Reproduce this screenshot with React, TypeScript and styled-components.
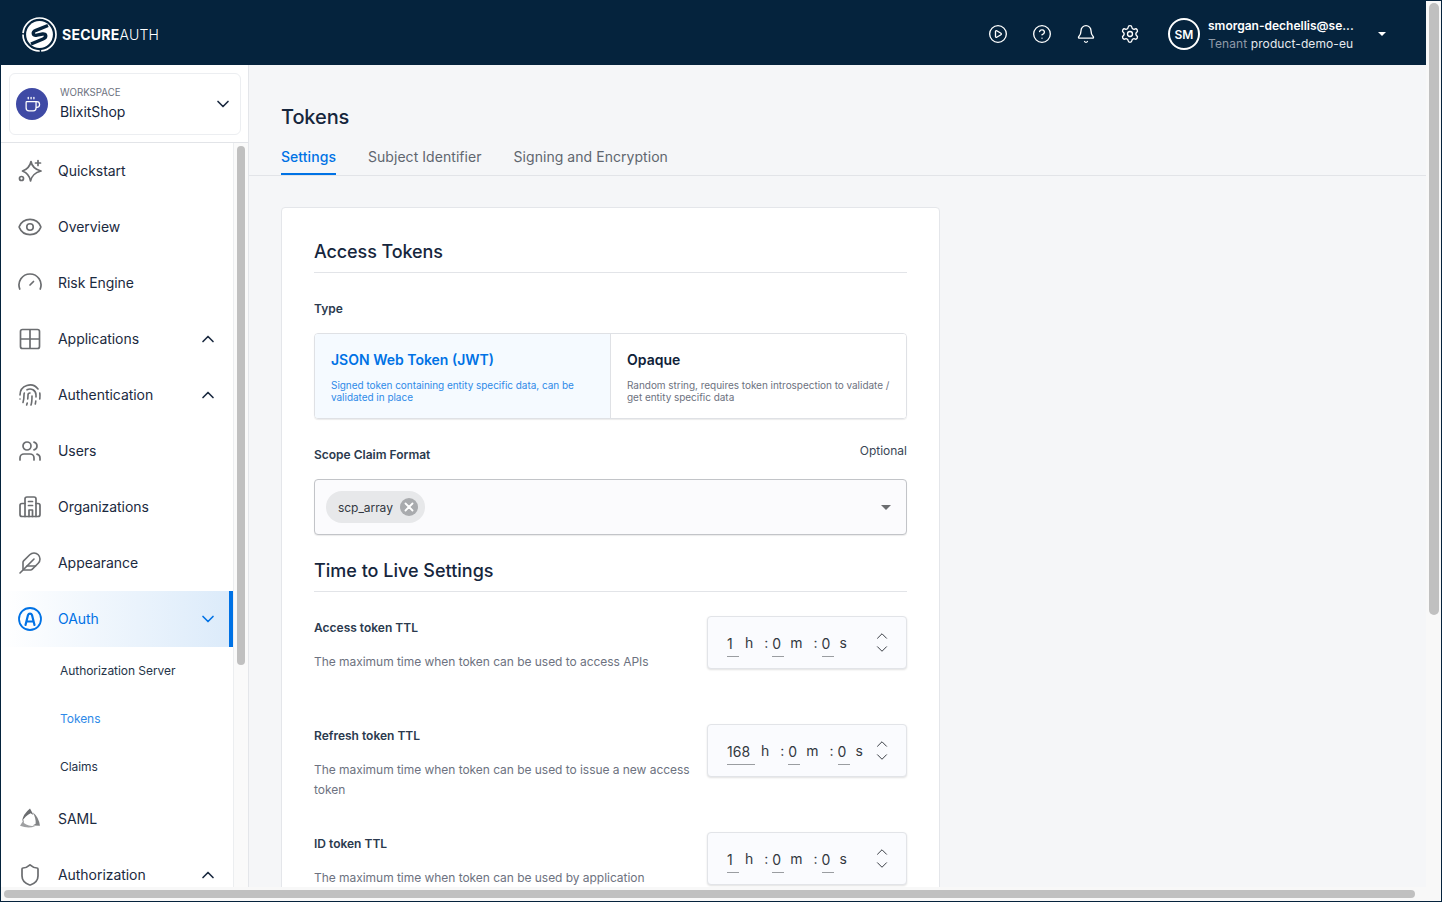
import React from "react";
import styled, { createGlobalStyle } from "styled-components";
import {
  Bell,
  ChevronDown,
  ChevronUp,
  CircleHelp,
  CirclePlay,
  Coffee,
  Eye,
  Feather,
  Fingerprint,
  Settings,
  Shield,
  Users,
} from "lucide-react";

const GlobalStyle = createGlobalStyle`
  html, body {
    margin: 0;
    padding: 0;
    overflow: hidden;
    background: #05233d;
    font-family: Inter, "Liberation Sans", sans-serif;
  }
  * { box-sizing: border-box; }
`;

const Frame = styled.div`
  width: 1442px;
  height: 902px;
  border: 1px solid #05233d;
  display: grid;
  grid-template-columns: 1425px 15px;
  grid-template-rows: 886px 14px;
  overflow: hidden;
  background: #f8f8f8;
`;

const Shell = styled.div`
  display: flex;
  flex-direction: column;
  overflow: hidden;
`;

const VTrack = styled.div`
  background: #f8f8f8;
  padding: 2px 2px 0 3px;
  grid-row: 1 / span 2;
  grid-column: 2;
`;

const VThumb = styled.div`
  height: 612px;
  background: #c0c0c0;
  border-radius: 5px;
`;

const HTrack = styled.div`
  background: #f8f8f8;
  padding: 3px 0 0 3px;
`;

const HThumb = styled.div`
  width: 1411px;
  height: 8px;
  background: #c0c0c0;
  border-radius: 4px;
`;

const Header = styled.header`
  height: 64px;
  flex: none;
  background: #05233d;
  display: flex;
  align-items: center;
  padding: 2px 40px 0 20px;
  color: #fff;
`;

const Brand = styled.div`
  display: flex;
  align-items: center;
  gap: 4px;
`;

const BrandText = styled.span`
  font-size: 14px;
  letter-spacing: 0.25px;
  font-weight: 700;
  b { font-weight: 300; }
`;

const HeaderIcons = styled.div`
  margin-left: auto;
  display: flex;
  align-items: center;
`;

const HeaderIcon = styled.span`
  width: 44px;
  display: flex;
  justify-content: center;
`;

const Account = styled.div`
  display: flex;
  align-items: center;
  margin-left: 16px;
`;

const Avatar = styled.div`
  width: 32px;
  height: 32px;
  border-radius: 50%;
  border: 2px solid #fff;
  display: flex;
  align-items: center;
  justify-content: center;
  font-size: 12px;
  font-weight: 600;
`;

const AccountText = styled.div`
  margin-left: 8px;
  width: 146px;
  padding-top: 2px;
  font-size: 12px;
  line-height: 18px;
  white-space: nowrap;
`;

const Email = styled.div`
  font-weight: 600;
`;

const Tenant = styled.div`
  color: #e6e9ee;
  letter-spacing: 0.1px;
  span { color: #8f9aa8; }
`;

const Caret = styled.span<{ $color?: string; $size?: number }>`
  width: 0;
  height: 0;
  border-left: ${(p) => p.$size ?? 5}px solid transparent;
  border-right: ${(p) => p.$size ?? 5}px solid transparent;
  border-top: ${(p) => p.$size ?? 5}px solid ${(p) => p.$color ?? "#fff"};
`;

const AccountCaret = styled(Caret)`
  margin-left: 24px;
`;

const Body = styled.div`
  flex: 1;
  min-height: 0;
  display: flex;
`;

const Sidebar = styled.aside`
  width: 248px;
  flex: none;
  background: #fff;
  border-right: 1px solid #e4e6ea;
  display: flex;
  flex-direction: column;
`;

const WorkspaceWrap = styled.div`
  height: 78px;
  flex: none;
  padding: 8px 7px 7px 8px;
  border-bottom: 1px solid #e2e4e8;
`;

const WorkspaceCard = styled.div`
  height: 62px;
  border: 1px solid #eceef1;
  border-radius: 6px;
  display: flex;
  align-items: center;
  padding: 0 7px 0 6px;
`;

const WorkspaceLogo = styled.div`
  width: 32px;
  height: 32px;
  border-radius: 50%;
  background: #3f4aa5;
  color: #fff;
  display: flex;
  align-items: center;
  justify-content: center;
  margin-right: 12px;
`;

const WorkspaceText = styled.div`
  flex: 1;
`;

const WorkspaceLabel = styled.div`
  font-size: 9.7px;
  line-height: 14px;
  margin-top: 1px;
  color: #6d7280;
`;

const WorkspaceName = styled.div`
  font-size: 14px;
  line-height: 22px;
  letter-spacing: -0.05px;
  margin-top: 1px;
  color: #16263d;
`;

const NavArea = styled.div`
  flex: 1;
  min-height: 0;
  display: flex;
  overflow: hidden;
`;

const Nav = styled.nav`
  width: 233px;
  flex: none;
  border-right: 1px solid #eceef0;
  overflow: hidden;
`;

const NavTrack = styled.div`
  flex: 1;
  padding: 3px 3px 0 3px;
  background: #fafafa;
`;

const NavThumb = styled.div`
  height: 519px;
  background: #c0c0c0;
  border-radius: 4px;
`;

const NavItem = styled.div<{ $active?: boolean }>`
  height: 56px;
  display: flex;
  align-items: center;
  padding: 0 ${(p) => (p.$active ? "11px" : "15px")} 0 17px;
  font-size: 14px;
  letter-spacing: -0.05px;
  color: ${(p) => (p.$active ? "#0072e5" : "#1b2a40")};
  background: ${(p) =>
    p.$active ? "linear-gradient(90deg, #ffffff 0%, #dcebfa 100%)" : "transparent"};
  border-right: ${(p) => (p.$active ? "4px solid #0072e5" : "none")};
`;

const NavIconBox = styled.span<{ $active?: boolean }>`
  width: 24px;
  height: 24px;
  flex: none;
  margin-right: 16px;
  display: flex;
  align-items: center;
  justify-content: center;
  color: ${(p) => (p.$active ? "#0072e5" : "#6b6d70")};
  svg { flex: none; }
`;

const NavLabel = styled.span`
  flex: 1;
  margin-top: -2px;
`;

const SubItem = styled.div<{ $active?: boolean }>`
  height: 48px;
  display: flex;
  align-items: center;
  padding: 0 0 2px 59px;
  font-size: 12px;
  letter-spacing: -0.05px;
  color: ${(p) => (p.$active ? "#2f8ae8" : "#253449")};
`;

const Main = styled.main`
  flex: 1;
  min-width: 0;
  background: #f5f6f8;
  overflow: hidden;
`;

const PageHead = styled.div`
  height: 111px;
  padding: 38px 0 0 32px;
  border-bottom: 1px solid #e2e4e8;
`;

const PageTitle = styled.h1`
  margin: 0;
  font-size: 20px;
  line-height: 28px;
  font-weight: 500;
  letter-spacing: -0.1px;
  color: #16263d;
`;

const Tabs = styled.div`
  display: flex;
  gap: 32px;
  margin-top: 11px;
`;

const Tab = styled.div<{ $active?: boolean }>`
  height: 33px;
  padding-top: 5px;
  font-size: 14px;
  line-height: 20px;
  letter-spacing: 0.05px;
  font-weight: ${(p) => (p.$active ? 500 : 400)};
  color: ${(p) => (p.$active ? "#0072e5" : "#60666f")};
  border-bottom: 2px solid ${(p) => (p.$active ? "#0072e5" : "transparent")};
`;

const Card = styled.section`
  width: 659px;
  margin: 31px 0 0 32px;
  background: #fff;
  border: 1px solid #e4e6ea;
  border-radius: 4px;
  padding: 32px 32px 40px;
`;

const SectionTitle = styled.h2`
  margin: 0;
  font-size: 18px;
  line-height: 24px;
  font-weight: 500;
  letter-spacing: -0.1px;
  color: #16263d;
  padding-bottom: 8px;
  border-bottom: 1px solid #e2e4e8;
`;

const FieldLabel = styled.div`
  font-size: 12px;
  line-height: 18px;
  font-weight: 600;
  color: #2b3a4e;
`;

const TypeLabel = styled(FieldLabel)`
  margin-top: 27px;
`;

const TypeGroup = styled.div`
  display: flex;
  margin-top: 15px;
  height: 86px;
  border: 1px solid #dfe1e5;
  border-radius: 4px;
  box-shadow: 0 1px 1px rgba(0, 0, 0, 0.08);
  overflow: hidden;
`;

const TypeOption = styled.div<{ $selected?: boolean }>`
  flex: none;
  width: ${(p) => (p.$selected ? "295px" : "296px")};
  padding: 16px 14px 0 16px;
  background: ${(p) => (p.$selected ? "#f5faff" : "#fff")};
  & + & { border-left: 1px solid #dfe1e5; }
`;

const TypeTitle = styled.div<{ $selected?: boolean }>`
  font-size: 14px;
  line-height: 20px;
  font-weight: 600;
  color: ${(p) => (p.$selected ? "#0072e5" : "#0f2238")};
`;

const TypeDesc = styled.div<{ $selected?: boolean }>`
  margin-top: 9px;
  font-size: 10px;
  line-height: 12px;
  letter-spacing: -0.035px;
  color: ${(p) => (p.$selected ? "#2f8ae8" : "#6d7280")};
`;

const ScopeHead = styled.div`
  display: flex;
  justify-content: space-between;
  margin-top: 23px;
  height: 28px;
`;

const ScopeLabel = styled(FieldLabel)`
  margin-top: 4px;
`;

const Optional = styled.div`
  font-size: 12px;
  line-height: 18px;
  color: #3a4656;
`;

const SelectBox = styled.div`
  margin-top: 9px;
  height: 56px;
  background: #fbfbfd;
  border: 1px solid #c2c4c8;
  border-radius: 4px;
  box-shadow: 0 1px 1px rgba(0, 0, 0, 0.08);
  display: flex;
  align-items: center;
  justify-content: space-between;
  padding: 0 15px 0 11px;
`;

const Chip = styled.div`
  height: 32px;
  border-radius: 16px;
  background: #e7e8ea;
  display: flex;
  align-items: center;
  padding: 0 7px 0 12px;
  gap: 7px;
  font-size: 12px;
  letter-spacing: -0.05px;
  color: #33383f;
`;

const ChipClose = styled.span`
  width: 18px;
  height: 18px;
  border-radius: 50%;
  background: #a9abae;
  display: flex;
  align-items: center;
  justify-content: center;
`;

const TtlTitle = styled(SectionTitle)`
  margin-top: 24px;
  letter-spacing: 0;
`;

const TtlRow = styled.div`
  display: flex;
  justify-content: space-between;
  height: 108px;
`;

const FirstTtlRow = styled(TtlRow)`
  margin-top: 24px;
`;

const TtlText = styled.div`
  width: 380px;
  padding-top: 3px;
`;

const TtlDesc = styled.div`
  margin-top: 15px;
  font-size: 12px;
  line-height: 20px;
  letter-spacing: -0.04px;
  color: #6d7280;
`;

const TimeBox = styled.div`
  width: 200px;
  height: 53px;
  background: #fafbfe;
  border: 1px solid #e2e4e8;
  border-radius: 4px;
  box-shadow: 0 1px 2px rgba(0, 0, 0, 0.12);
  display: flex;
  align-items: center;
  padding-left: 19px;
  font-size: 14px;
  color: #33383f;
`;

const TimeValue = styled.span<{ $wide?: boolean }>`
  width: ${(p) => (p.$wide ? "28px" : "12px")};
  text-align: left;
  padding-bottom: 1px;
  height: 26px;
  line-height: 26px;
  border-bottom: 1px solid #9a9da1;
  margin-top: 2px;
`;

const TimeUnit = styled.span`
  margin-left: 6px;
`;

const TimeSep = styled.span`
  margin-left: 11px;
  width: 8px;
`;

const Spinner = styled.span`
  margin-left: auto;
  margin-right: 15px;
  display: flex;
  flex-direction: column;
  color: #33383f;
  svg + svg { margin-top: -4.5px; }
`;

const LogoMark = () => (
  <svg width="37" height="37" viewBox="0 0 37 37" fill="none">
    <circle cx="18.5" cy="18.5" r="16.5" stroke="#fff" strokeWidth="1.7" strokeDasharray="24 1.5 26 1.5 50 1.5" />
    <circle cx="18.5" cy="18.5" r="13.4" fill="#fff" />
    <path
      d="M27 9.5 L15 14.3 C10.5 16.3 12 20 16 19.2 L21.5 18 C25.5 17.5 26 21.2 22 23 L10 28"
      stroke="#05233d"
      strokeWidth="3.4"
      strokeLinecap="butt"
    />
  </svg>
);

const SparkIcon = () => (
  <svg width="24" height="24" viewBox="0 0 24 24" fill="none" stroke="currentColor" strokeWidth="1.7" strokeLinecap="round" strokeLinejoin="round">
    <path d="M13 2.5c.8 5 3.4 7.7 10 9.5-6.6 1.800-9.200 4.500-10.500 10-.8-5.500-3.500-8.200-8-10 5-1.800 7.500-4.500 8.500-9.500z" />
    <path d="M20 1.500v5M17.500 4h5" />
    <circle cx="3.500" cy="19.500" r="2" />
  </svg>
);

const GaugeIcon = () => (
  <svg width="24" height="24" viewBox="0 0 24 24" fill="none" stroke="currentColor" strokeWidth="1.7" strokeLinecap="round">
    <path d="M1.750 18A11 11 0 1 1 22.250 18" />
    <path d="M12 14l3.500-3.500" />
  </svg>
);

const GridIcon = () => (
  <svg width="24" height="24" viewBox="0 0 24 24" fill="none" stroke="currentColor" strokeWidth="1.7">
    <rect x="2.500" y="2.500" width="19" height="19" rx="2" />
    <path d="M12 2.500v19M2.500 12h19" />
  </svg>
);

const BuildingIcon = () => (
  <svg width="24" height="24" viewBox="0 0 24 24" fill="none" stroke="currentColor" strokeWidth="1.7" strokeLinecap="round" strokeLinejoin="round">
    <path d="M7 21.500V4a2 2 0 0 1 2-2h7a2 2 0 0 1 2 2v17.500z" />
    <path d="M7 8.500H4a2 2 0 0 0-2 2v9a2 2 0 0 0 2 2h3M18 8.500h2a2 2 0 0 1 2 2v9a2 2 0 0 1-2 2h-2" />
    <path d="M10.500 6.500h4M10.500 10.500h4M11 21.500V15h3.500v6.500" />
  </svg>
);

const OAuthIcon = () => (
  <svg width="24" height="24" viewBox="0 0 24 24" fill="none" stroke="currentColor" strokeWidth="1.800" strokeLinecap="round">
    <circle cx="12" cy="12" r="11" />
    <path d="M7.500 18 L10 8a2.100 2.100 0 0 1 4 0L16.500 18M8.500 14.500h7" strokeWidth="2.200" />
  </svg>
);

const samlBlade = "M12 1.500L15.500 8l-3-1.800Q7.500 8.500 4 14.500Q5 7 12 1.500z";

const SamlIcon = () => (
  <svg width="24" height="24" viewBox="0 0 24 24" fill="currentColor">
    <path d={samlBlade} />
    <path d={samlBlade} transform="rotate(120 12 13)" opacity="0.85" />
    <path d={samlBlade} transform="rotate(240 12 13)" opacity="0.65" />
  </svg>
);

type NavEntry = {
  label: string;
  icon: React.ReactNode;
  chevron?: "up" | "down";
  active?: boolean;
};

const topNav: NavEntry[] = [
  { label: "Quickstart", icon: <SparkIcon /> },
  { label: "Overview", icon: <Eye size={26} strokeWidth={1.500} /> },
  { label: "Risk Engine", icon: <GaugeIcon /> },
  { label: "Applications", icon: <GridIcon />, chevron: "up" },
  { label: "Authentication", icon: <Fingerprint size={24} strokeWidth={1.600} />, chevron: "up" },
  { label: "Users", icon: <Users size={24} strokeWidth={1.700} /> },
  { label: "Organizations", icon: <BuildingIcon /> },
  { label: "Appearance", icon: <Feather size={24} strokeWidth={1.600} /> },
  { label: "OAuth", icon: <OAuthIcon />, chevron: "down", active: true },
];

const bottomNav: NavEntry[] = [
  { label: "SAML", icon: <SamlIcon /> },
  { label: "Authorization", icon: <Shield size={24} strokeWidth={1.700} />, chevron: "up" },
];

const NavRow = ({ item }: { item: NavEntry }) => (
  <NavItem $active={item.active}>
    <NavIconBox $active={item.active}>{item.icon}</NavIconBox>
    <NavLabel>{item.label}</NavLabel>
    {item.chevron === "up" && <ChevronUp size={20} strokeWidth={2} color="#1b2a40" />}
    {item.chevron === "down" && <ChevronDown size={20} strokeWidth={2} color="#0072e5" />}
  </NavItem>
);

const TimeField = ({ hours }: { hours: string }) => (
  <TimeBox>
    <TimeValue $wide={hours.length > 1}>{hours}</TimeValue>
    <TimeUnit>h</TimeUnit>
    <TimeSep>:</TimeSep>
    <TimeValue>0</TimeValue>
    <TimeUnit>m</TimeUnit>
    <TimeSep>:</TimeSep>
    <TimeValue>0</TimeValue>
    <TimeUnit>s</TimeUnit>
    <Spinner>
      <ChevronUp size={18} strokeWidth={1.300} />
      <ChevronDown size={18} strokeWidth={1.300} />
    </Spinner>
  </TimeBox>
);

const App = () => {
  return (
    <Frame>
      <GlobalStyle />
      <Shell>
        <Header>
          <Brand>
            <LogoMark />
            <BrandText>
              SECURE<b>AUTH</b>
            </BrandText>
          </Brand>
          <HeaderIcons>
            <HeaderIcon><CirclePlay size={20} strokeWidth={1.600} /></HeaderIcon>
            <HeaderIcon><CircleHelp size={20} strokeWidth={1.600} /></HeaderIcon>
            <HeaderIcon><Bell size={20} strokeWidth={1.600} /></HeaderIcon>
            <HeaderIcon><Settings size={20} strokeWidth={1.600} /></HeaderIcon>
          </HeaderIcons>
          <Account>
            <Avatar>SM</Avatar>
            <AccountText>
              <Email>smorgan-dechellis@se...</Email>
              <Tenant><span>Tenant</span> product-demo-eu</Tenant>
            </AccountText>
            <AccountCaret $size={4.5} />
          </Account>
        </Header>
        <Body>
          <Sidebar>
            <WorkspaceWrap>
              <WorkspaceCard>
                <WorkspaceLogo><Coffee size={17} strokeWidth={1.800} /></WorkspaceLogo>
                <WorkspaceText>
                  <WorkspaceLabel>WORKSPACE</WorkspaceLabel>
                  <WorkspaceName>BlixitShop</WorkspaceName>
                </WorkspaceText>
                <ChevronDown size={20} strokeWidth={2} color="#1b2a40" />
              </WorkspaceCard>
            </WorkspaceWrap>
            <NavArea>
              <Nav>
                {topNav.map((item) => (
                  <NavRow key={item.label} item={item} />
                ))}
                <SubItem>Authorization Server</SubItem>
                <SubItem $active>Tokens</SubItem>
                <SubItem>Claims</SubItem>
                {bottomNav.map((item) => (
                  <NavRow key={item.label} item={item} />
                ))}
              </Nav>
              <NavTrack>
                <NavThumb />
              </NavTrack>
            </NavArea>
          </Sidebar>
          <Main>
            <PageHead>
              <PageTitle>Tokens</PageTitle>
              <Tabs>
                <Tab $active>Settings</Tab>
                <Tab>Subject Identifier</Tab>
                <Tab>Signing and Encryption</Tab>
              </Tabs>
            </PageHead>
            <Card>
              <SectionTitle>Access Tokens</SectionTitle>
              <TypeLabel>Type</TypeLabel>
              <TypeGroup>
                <TypeOption $selected>
                  <TypeTitle $selected>JSON Web Token (JWT)</TypeTitle>
                  <TypeDesc $selected>
                    Signed token containing entity specific data, can be validated in place
                  </TypeDesc>
                </TypeOption>
                <TypeOption>
                  <TypeTitle>Opaque</TypeTitle>
                  <TypeDesc>
                    Random string, requires token introspection to validate / get entity specific data
                  </TypeDesc>
                </TypeOption>
              </TypeGroup>
              <ScopeHead>
                <ScopeLabel>Scope Claim Format</ScopeLabel>
                <Optional>Optional</Optional>
              </ScopeHead>
              <SelectBox>
                <Chip>
                  scp_array
                  <ChipClose>
                    <svg width="10" height="10" viewBox="0 0 10 10" stroke="#fff" strokeWidth="1.800" strokeLinecap="round">
                      <path d="M1.500 1.500l7 7M8.500 1.500l-7 7" />
                    </svg>
                  </ChipClose>
                </Chip>
                <Caret $color="#6b6d70" />
              </SelectBox>
              <TtlTitle>Time to Live Settings</TtlTitle>
              <FirstTtlRow>
                <TtlText>
                  <FieldLabel>Access token TTL</FieldLabel>
                  <TtlDesc>The maximum time when token can be used to access APIs</TtlDesc>
                </TtlText>
                <TimeField hours="1" />
              </FirstTtlRow>
              <TtlRow>
                <TtlText>
                  <FieldLabel>Refresh token TTL</FieldLabel>
                  <TtlDesc>
                    The maximum time when token can be used to issue a new access token
                  </TtlDesc>
                </TtlText>
                <TimeField hours="168" />
              </TtlRow>
              <TtlRow>
                <TtlText>
                  <FieldLabel>ID token TTL</FieldLabel>
                  <TtlDesc>The maximum time when token can be used by application</TtlDesc>
                </TtlText>
                <TimeField hours="1" />
              </TtlRow>
            </Card>
          </Main>
        </Body>
      </Shell>
      <VTrack>
        <VThumb />
      </VTrack>
      <HTrack>
        <HThumb />
      </HTrack>
    </Frame>
  );
};

export default App;
